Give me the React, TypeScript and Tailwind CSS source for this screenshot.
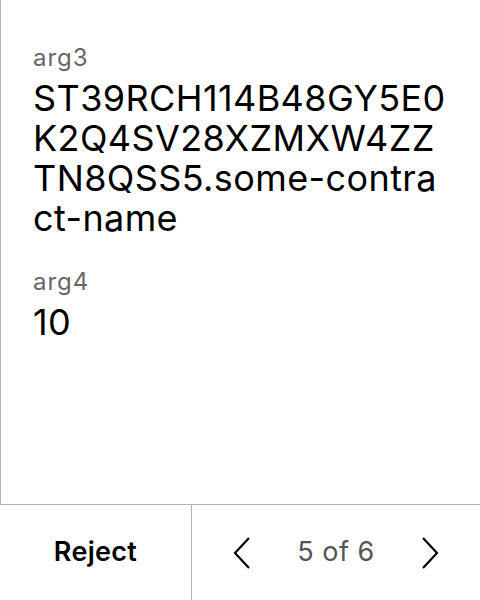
export default function App() {
  return (
    <div
      className="flex h-[600px] w-[480px] flex-col bg-white text-black"
      style={{ fontFamily: "Inter, 'Noto Sans', sans-serif" }}
    >
      {/* Args */}
      <div className="flex-1 border-l border-[#b3b3b3] pl-8 pr-[30px] pt-[42px]">
        <div className="mb-7">
          <div className="text-[24px] leading-[32px] tracking-[1px] text-[#666666]">arg3</div>
          <div className="mt-1 break-all text-[36px] leading-[40px] tracking-[0.4px]">
            ST39RCH114B48GY5E0K2Q4SV28XZMXW4ZZTN8QSS5.some-contract-name
          </div>
        </div>
        <div>
          <div className="text-[24px] leading-[32px] tracking-[1px] text-[#666666]">arg4</div>
          <div className="mt-1 text-[36px] leading-[40px] tracking-[0.4px]">10</div>
        </div>
      </div>

      {/* Footer */}
      <div className="flex h-[96px] border-t border-[#b3b3b3]">
        <button className="flex w-[192px] items-center justify-center border-r border-[#b3b3b3] text-[27px] font-semibold tracking-[0.3px]">
          Reject
        </button>
        <div className="flex flex-1 items-center justify-between pl-[41px] pr-[41px]">
          <svg width="18" height="32" viewBox="0 0 18 32" fill="none" stroke="black" strokeWidth="2.2">
            <path d="M16 1L2 16l14 15" />
          </svg>
          <span className="text-[27px] tracking-[0.5px] text-[#555555]">5 of 6</span>
          <svg width="18" height="32" viewBox="0 0 18 32" fill="none" stroke="black" strokeWidth="2.2">
            <path d="M2 1l14 15L2 31" />
          </svg>
        </div>
      </div>
    </div>
  );
}
